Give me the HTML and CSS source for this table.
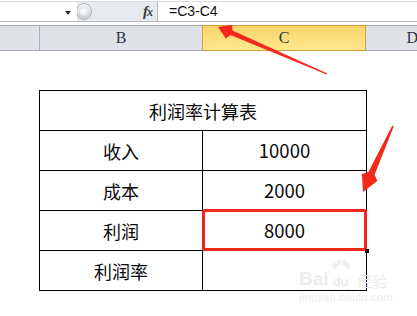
FILE: index.html
```html
<!DOCTYPE html>
<html lang="zh">
<head>
<meta charset="utf-8">
<title>利润率计算表</title>
<link rel="stylesheet" href="styles.css">
</head>
<body>
<div class="app">
  <div class="formula-bar">
    <div class="namebox"><span class="dd"></span></div>
    <div class="fxzone">
      <span class="knob"><span class="knob-dot"></span></span>
      <span class="fx"><span class="fx-f">f</span><span class="fx-x">x</span></span>
    </div>
    <div class="input">=C3-C4</div>
  </div>
  <div class="headers">
    <div class="hd hd-a"></div>
    <div class="hd hd-b">B</div>
    <div class="hd hd-c">C</div>
    <div class="hd hd-d">D</div>
  </div>
  <div class="sheet">
    <table class="calc">
      <colgroup><col class="col-b"><col class="col-c"></colgroup>
      <tr><td colspan="2" class="title">利润率计算表</td></tr>
      <tr><td>收入</td><td class="num">10000</td></tr>
      <tr><td>成本</td><td class="num">2000</td></tr>
      <tr><td>利润</td><td class="num sel">8000</td></tr>
      <tr><td>利润率</td><td class="num"></td></tr>
    </table>
  </div>
  <div class="watermark">
    <div class="wm-top">
      <span class="wm-bai">Bai</span>
      <span class="wm-du">
        <svg class="wm-paw" width="22" height="16" viewBox="0 0 22 16">
          <ellipse cx="5" cy="7" rx="2.4" ry="3" />
          <ellipse cx="9" cy="3.5" rx="2.4" ry="3" />
          <ellipse cx="14" cy="3.5" rx="2.4" ry="3" />
          <ellipse cx="18" cy="7" rx="2.4" ry="3" />
        </svg>
        <span class="wm-du-text">du</span>
      </span>
      <span class="wm-jy">经验</span>
    </div>
    <div class="wm-url">jingyan.baidu.com</div>
  </div>
  <svg class="arrows" width="417" height="316" viewBox="0 0 417 316">
    <polygon points="327.3,73.4 232.5,30.5 231.8,24.7 218,27 225.8,38.5 230.5,35.1 326.7,74.6" />
    <polygon points="393.8,126.3 374.6,174.7 377.3,181 363,192 361.9,173.9 368.4,171.9 392.2,125.7" />
  </svg>
</div>
</body>
</html>
```

FILE: styles.css
```css
html, body {
  margin: 0;
  padding: 0;
  background: #fff;
}

.app {
  position: relative;
  width: 417px;
  height: 316px;
  overflow: hidden;
  font-family: "Noto Sans CJK SC", "Noto Sans", sans-serif;
  color: #000;
}

/* formula bar */
.formula-bar {
  display: flex;
  height: 19px;
  margin-top: 1px;
  border-top: 1px solid #d9dce1;
  border-bottom: 1px solid #b8bdc5;
}

.namebox {
  position: relative;
  width: 77px;
  background: #fff;
}

.dd {
  position: absolute;
  left: 65px;
  top: 9px;
  width: 0;
  height: 0;
  border-left: 3px solid transparent;
  border-right: 3px solid transparent;
  border-top: 4px solid #2b2b2b;
}

.fxzone {
  display: flex;
  align-items: center;
  justify-content: space-between;
  width: 75px;
  padding-right: 5px;
  background: #e6e9ed;
  border-right: 1px solid #b3b9c1;
}

.knob {
  display: flex;
  align-items: center;
  justify-content: center;
  width: 16px;
  height: 17px;
  margin-left: -1px;
  border-radius: 9px;
  background: linear-gradient(#f3f4f6, #c9cdd3);
  border: 1px solid #b3b8bf;
  box-sizing: border-box;
}

.knob-dot {
  width: 8px;
  height: 8px;
  border-radius: 50%;
  background: radial-gradient(circle at 40% 35%, #ffffff, #d7dade);
}

.fx {
  font-family: "Liberation Serif", serif;
  font-style: italic;
  font-weight: bold;
  font-size: 15px;
  line-height: 1;
  color: #3a3a3a;
  letter-spacing: -1px;
}

.fx-x {
  font-size: 12px;
}

.input {
  flex: 1;
  padding-left: 11px;
  font-family: "Liberation Sans", sans-serif;
  font-size: 14px;
  line-height: 19px;
  color: #111;
  background: #fff;
}

/* column headers */
.headers {
  display: flex;
  height: 24px;
  margin-top: 3px;
  border-top: 1px solid #a4abb4;
  border-bottom: 1px solid #a4abb4;
  background: #dfe3e8;
}

.hd {
  display: flex;
  align-items: center;
  justify-content: center;
  box-sizing: border-box;
  font-family: "Liberation Serif", serif;
  font-size: 16px;
  color: #2a3544;
  flex: none;
}

.hd-a {
  width: 40px;
  border-right: 1px solid #aab1ba;
}

.hd-b {
  width: 162px;
}

.hd-c {
  width: 164px;
  margin-top: -1px;
  margin-bottom: -1px;
  border: 1px solid #d39f3a;
  background: linear-gradient(#f9d46b, #ffe88d);
}

.hd-d {
  width: 90px;
  justify-content: flex-end;
  padding-right: 38px;
}

/* sheet */
.sheet {
  padding: 39px 0 0 39px;
}

.calc {
  border-collapse: collapse;
  table-layout: fixed;
  width: 327px;
}

.col-b {
  width: 163px;
}

.col-c {
  width: 164px;
}

.calc tr {
  height: 40px;
}

.calc td {
  border: 1px solid #000;
  padding: 0;
  text-align: center;
  vertical-align: middle;
  font-size: 18px;
  line-height: 1;
  color: #0a0a0a;
}

.calc td.num {
  font-size: 18.5px;
}

.calc td.sel {
  position: relative;
}

.calc td.sel::after {
  content: "";
  position: absolute;
  left: -1px;
  top: -2px;
  right: -1px;
  bottom: -1px;
  border: 3px solid #f2271a;
  border-radius: 3px;
}

.calc td.sel::before {
  content: "";
  position: absolute;
  right: -3px;
  bottom: -3px;
  width: 4px;
  height: 4px;
  background: #000;
  z-index: 2;
}

/* watermark */
.watermark {
  position: absolute;
  left: 299px;
  top: 258px;
  width: 92px;
  color: #ececec;
  font-family: "Liberation Sans", sans-serif;
}

.wm-top {
  display: flex;
  align-items: flex-end;
  height: 32px;
}

.wm-bai {
  font-size: 19px;
  font-weight: bold;
  line-height: 1;
  padding-bottom: 2px;
}

.wm-du {
  position: relative;
  display: flex;
  flex-direction: column;
  align-items: center;
  width: 24px;
}

.wm-paw {
  fill: #eeeeee;
}

.wm-du-text {
  font-size: 13px;
  font-weight: bold;
  line-height: 1;
  padding-bottom: 2px;
}

.wm-jy {
  margin-left: 5px;
  font-family: "Noto Sans CJK SC", sans-serif;
  font-size: 15px;
  line-height: 1;
  padding-bottom: 2px;
}

.wm-url {
  font-size: 11px;
  line-height: 1;
  margin-top: 2px;
  letter-spacing: 0.3px;
}

/* arrows overlay */
.arrows {
  position: absolute;
  left: 0;
  top: 0;
  pointer-events: none;
  fill: #f5291b;
}
```
